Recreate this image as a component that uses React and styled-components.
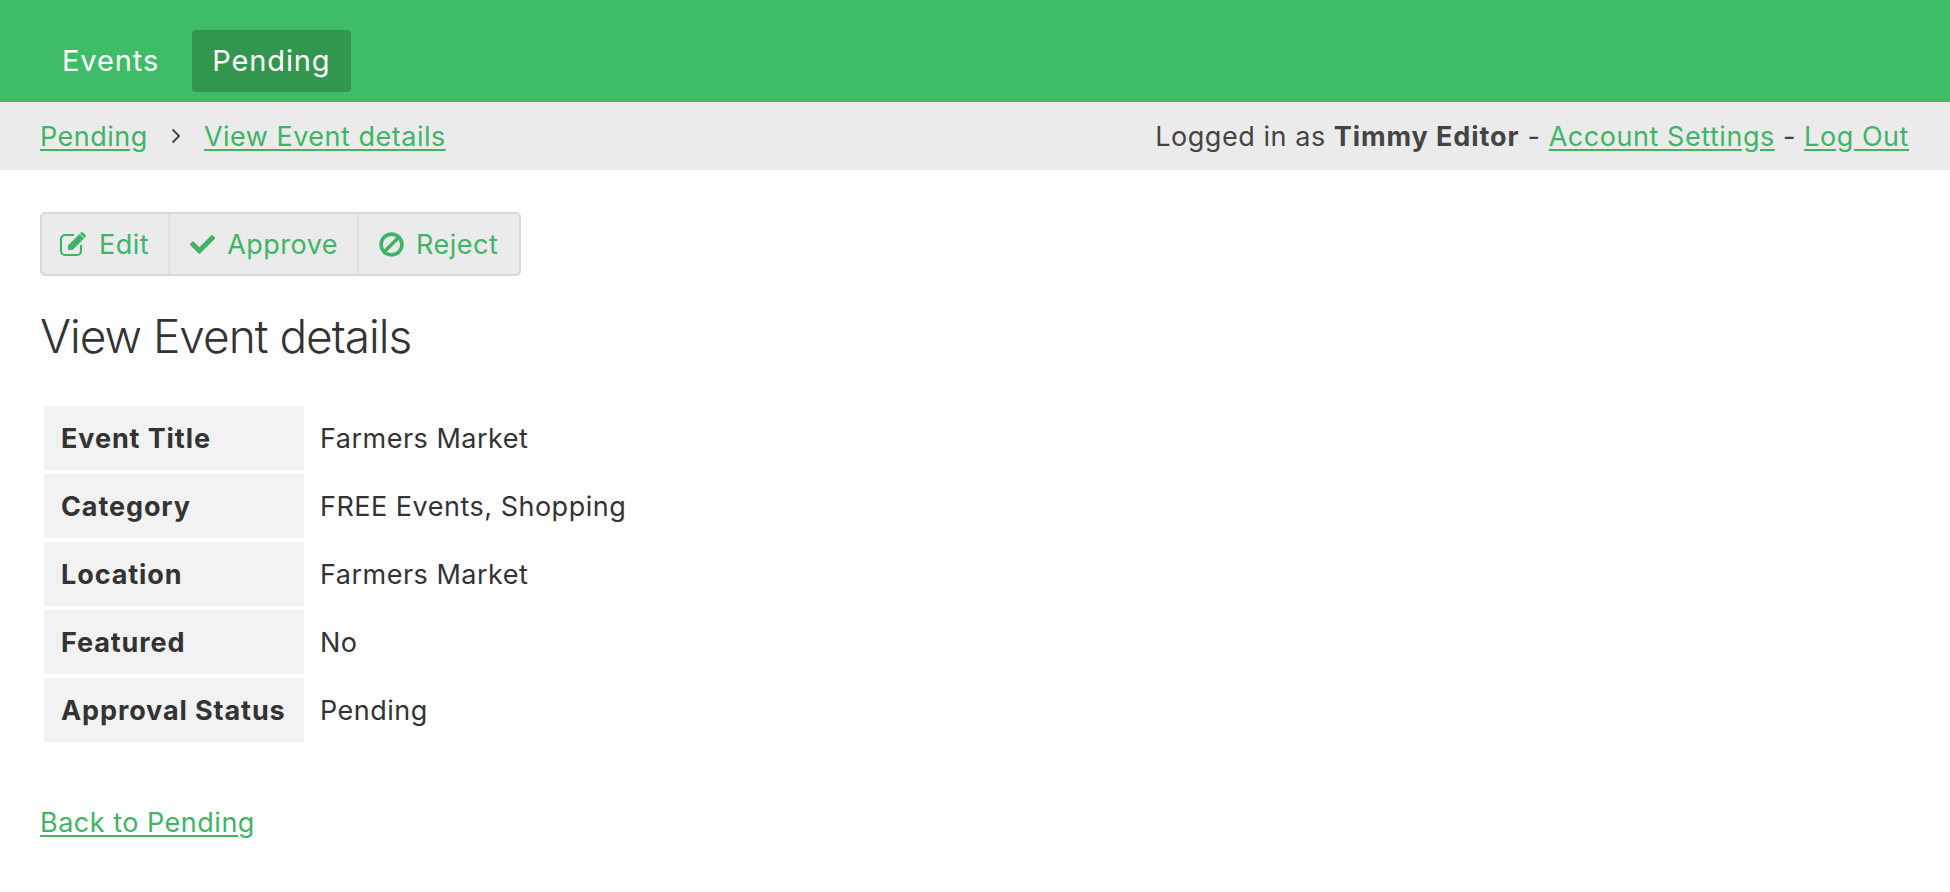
import styled, { createGlobalStyle } from 'styled-components';
import { FaCheck } from 'react-icons/fa';

const GlobalStyle = createGlobalStyle`
  html, body {
    margin: 0;
    padding: 0;
    background: #fff;
    font-family: Inter, "Liberation Sans", sans-serif;
    font-size: 27px;
    letter-spacing: 0.5px;
    color: #333;
  }
  strong, th {
    letter-spacing: 0.9px;
  }
`;

const rows = [
  ['Event Title', 'Farmers Market'],
  ['Category', 'FREE Events, Shopping'],
  ['Location', 'Farmers Market'],
  ['Featured', 'No'],
  ['Approval Status', 'Pending'],
];

const EditIcon = () => (
  <svg width="28" height="26" viewBox="0 0 28 26" fill="none">
    <path d="M15 4H6a4 4 0 0 0-4 4v12a4 4 0 0 0 4 4h12a4 4 0 0 0 4-4v-6" stroke="currentColor" strokeWidth="2.2" />
    <path d="M9 14.5 20.5 3l4.5 4.5L13.5 19H9z" fill="currentColor" />
    <path d="M22 1.5a1.4 1.4 0 0 1 2 0l2.5 2.5a1.4 1.4 0 0 1 0 2l-1 1L21 2.5z" fill="currentColor" />
  </svg>
);

const BanIcon = () => (
  <svg width="25" height="25" viewBox="0 0 25 25" fill="none" stroke="currentColor" strokeWidth="3.6">
    <circle cx="12.5" cy="12.5" r="10.4" />
    <path d="M5.5 19.5 19.5 5.5" />
  </svg>
);

const ChevronIcon = () => (
  <svg width="10" height="16" viewBox="0 0 10 16" fill="none" stroke="#444" strokeWidth="1.9">
    <path d="M1.5 1.5 8 8l-6.500 6.500" />
  </svg>
);

const App = () => (
  <>
    <GlobalStyle />
    <TopBar>
      <NavItem>Events</NavItem>
      <NavItem $active>Pending</NavItem>
    </TopBar>
    <SubBar>
      <Crumbs>
        <GreenLink href="#">Pending</GreenLink>
        <ChevronSlot><ChevronIcon /></ChevronSlot>
        <GreenLink href="#">View Event details</GreenLink>
      </Crumbs>
      <Account>
        Logged in as <strong>Timmy Editor</strong> - <GreenLink href="#">Account Settings</GreenLink> - <GreenLink href="#">Log Out</GreenLink>
      </Account>
    </SubBar>
    <Main>
      <Toolbar>
        <ToolButton><EditIcon />Edit</ToolButton>
        <ToolButton><FaCheck size={25} />Approve</ToolButton>
        <ToolButton><BanIcon />Reject</ToolButton>
      </Toolbar>
      <Title>View Event details</Title>
      <Details>
        <tbody>
          {rows.map(([label, value]) => (
            <tr key={label}>
              <Label>{label}</Label>
              <Value>{value}</Value>
            </tr>
          ))}
        </tbody>
      </Details>
      <BackRow>
        <GreenLink href="#">Back to Pending</GreenLink>
      </BackRow>
    </Main>
  </>
);

const TopBar = styled.div`
  display: flex;
  align-items: flex-start;
  gap: 13px;
  height: 102px;
  padding: 30px 0 0 42px;
  box-sizing: border-box;
  background: #3fbc67;
`;

const NavItem = styled.div`
  height: 62px;
  line-height: 62px;
  padding: 0 20px;
  border-radius: 4px;
  color: #fff;
  font-size: 29px;
  letter-spacing: 0.9px;
  background: ${props => (props.$active ? '#33964f' : 'transparent')};
`;

const SubBar = styled.div`
  display: flex;
  justify-content: space-between;
  align-items: center;
  height: 68px;
  padding: 0 41px 0 40px;
  background: #ebebeb;
`;

const Crumbs = styled.div`
  display: flex;
  align-items: center;
`;

const ChevronSlot = styled.span`
  display: flex;
  justify-content: center;
  width: 56px;
`;

const Account = styled.div`
  color: #444;
  letter-spacing: 0.55px;
`;

const GreenLink = styled.a`
  color: #3fb467;
  text-decoration: underline;
  text-underline-offset: 3px;
`;

const Main = styled.div`
  padding: 42px 40px 0;
`;

const Toolbar = styled.div`
  display: inline-flex;
  height: 64px;
  box-sizing: border-box;
  border: 2px solid #d9d9d9;
  border-radius: 5px;
  background: #ebebeb;
`;

const ToolButton = styled.div`
  display: flex;
  align-items: center;
  gap: 12px;
  padding: 0 19px 0 20px;
  color: #3fb467;
  border-left: 2px solid #e0e0e0;

  &:first-child {
    padding-left: 17px;
    border-left: 0;
  }

  &:last-child {
    padding-right: 21px;
  }
`;

const Title = styled.h1`
  margin: 30px 0 0;
  font-size: 46px;
  line-height: 60px;
  font-weight: 300;
  letter-spacing: -1px;
  color: #333;
`;

const Details = styled.table`
  margin-top: 36px;
  border-collapse: separate;
  border-spacing: 4px;
`;

const Label = styled.th`
  width: 260px;
  height: 64px;
  padding: 0 16px 0 17px;
  box-sizing: border-box;
  text-align: left;
  font-weight: 700;
  background: #f2f2f2;
  white-space: nowrap;
`;

const Value = styled.td`
  padding: 0 0 0 12px;
`;

const BackRow = styled.div`
  margin-top: 60px;
`;

export default App;
